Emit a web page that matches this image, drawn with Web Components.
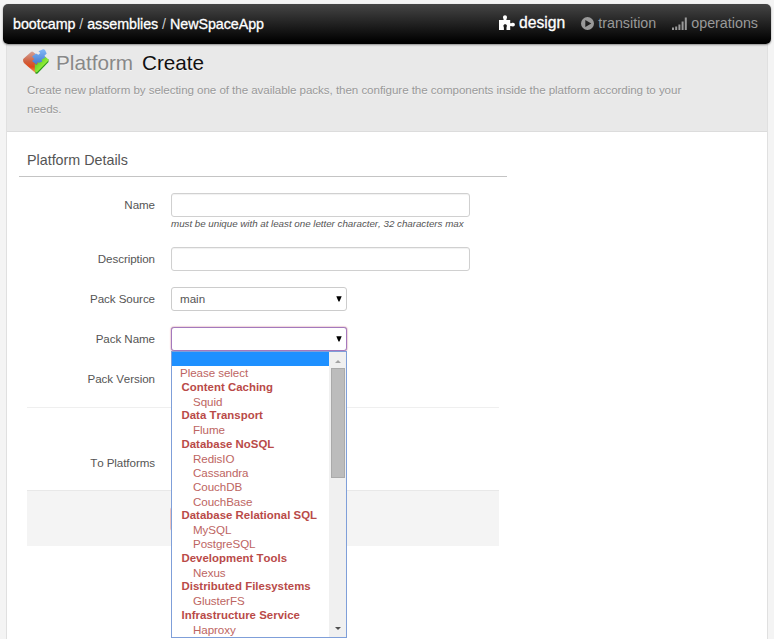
<!DOCTYPE html>
<html lang="en"><head><meta charset="utf-8"><title>Platform Create</title>
<style>
html,body{margin:0;height:100%;overflow:hidden;background:#f4f4f4}
body{font-family:"Liberation Sans",Arial,sans-serif;font-size:11.600px;letter-spacing:-.07px;font-kerning:none;color:#555}
</style></head><body>
<platform-page></platform-page>
<script>
const define = (name, html, setup) => customElements.define(name, class extends HTMLElement {
  constructor(){ super(); this.attachShadow({mode:'open'}).innerHTML = html; }
  connectedCallback(){ if(setup) setup(this, this.shadowRoot); }
});

define('nav-link', `<style>
:host{display:flex;align-items:center;gap:4px;font-size:14.3px;letter-spacing:0;line-height:20px;color:#999;white-space:nowrap}
:host([active]){color:#fff;font-size:15.700px;-webkit-text-stroke:.3px #fff}
</style><slot name="icon"></slot><slot></slot>`);

define('app-bar', `<style>
:host{display:flex;justify-content:space-between;align-items:center;box-sizing:border-box;height:40px;margin:0 3px;padding:0 13px 2px 10px;border-radius:5px;background:linear-gradient(#454545,#000 95%);box-shadow:0 1px 2px #0006;position:relative}
.crumbs{font-size:14.3px;letter-spacing:-.05px;color:#fff;-webkit-text-stroke:.3px #fff;white-space:pre;padding-top:1px}
i{font-style:normal;color:#ccc;-webkit-text-stroke:0}
nav{display:flex;gap:16px}
svg{fill:currentColor;display:block}
</style><div class="crumbs">bootcamp<i> / </i>assemblies<i> / </i>NewSpaceApp</div>
<nav>
<nav-link active><svg slot="icon" width="16" height="16" viewBox="0 0 16 16"><path d="M0 5h4.500C5 4.500 4 3.500 4 2.300 4 .9 4.800.2 6 .2s2 .8 2 2C8 3.500 7 4.500 7.500 5h3.700v3c.7.8 1.500-.3 2.800-.3 1.200 0 1.900.8 1.900 1.900s-.8 2-1.900 2c-1.300 0-2-.9-2.800-.3V15H7.500v-2c0-1 .4-1.300.4-2.200 0-.9-.7-1.500-1.700-1.500s-1.800.6-1.800 1.500c0 .9.5 1.200.5 2.200v2H0z"/></svg>design</nav-link>
<nav-link><svg slot="icon" width="13" height="13" viewBox="0 0 13 13"><path fill-rule="evenodd" d="M6.500 0a6.500 6.500 0 1 0 0 13 6.500 6.500 0 0 0 0-13zM4.300 3v7l6-3.500z"/></svg>transition</nav-link>
<nav-link><svg slot="icon" width="15" height="13" viewBox="0 0 15 13"><path d="M0 10.500h2V13H0zM3.200 9.500h2V13h-2zM6.400 7.500h2V13h-2zM9.600 4.500h2V13h-2zM12.800.5h2V13h-2z"/></svg>operations</nav-link>
</nav>`);

define('page-header', `<style>
:host{display:block;box-sizing:border-box;height:88px;padding:5px 70px 0 20px;background:#e9e9e9;border-bottom:1px solid #dcdcdc}
h1{display:flex;align-items:center;margin:0;margin-left:-5px;height:27px;font-size:20.7px;letter-spacing:0;font-weight:400;color:#111;text-shadow:0 1px #fff8}
svg{margin-right:6px;overflow:visible}span{color:#888;margin-right:9px}
p{margin:4px 0 0;line-height:19px;letter-spacing:-.06px;color:#999;text-shadow:0 1px #fff8}
</style><h1><svg width="28" height="26" viewBox="0 0 28 26">
<defs><linearGradient id="r" x2="0" y2="1"><stop stop-color="#d3a298"/><stop offset=".45" stop-color="#d0603f"/><stop offset=".7" stop-color="#e04a18"/><stop offset="1" stop-color="#f7a868"/></linearGradient><linearGradient id="g" x2="1" y2="1"><stop stop-color="#3fb52a"/><stop offset=".6" stop-color="#91ed35"/><stop offset="1" stop-color="#4dbb22"/></linearGradient><linearGradient id="b" x2="0" y2="1"><stop stop-color="#80b8f8"/><stop offset="1" stop-color="#4379cd"/></linearGradient></defs>
<path fill="url(#r)" d="M1 10Q1 9 2 8.200L9 2q1.200-.8 2.200 0L15 5v6l2 3-3 9.500L2.500 13.500Q1 12 1 10z"/>
<path fill="#2b9a1c" d="M13.500 21 26.500 9v3L15.500 23.500q-1 .7-2 0z"/>
<path fill="url(#g)" d="M12.800 14 15 15l1-3 3-3 4-2.500L26 9q1 1 0 2L15.200 22q-1 .7-2.400-.8z"/>
<path fill="url(#b)" d="M10 6.500 14 3.500l2.500 1.300L18.300 3 16.500 1.200l4.500-2q1.200-.3 2 .8l1.700 3.500-2.200 2.300 1 1.700-3.800 2 .6 2-3.100 1.300-1.800-.6-1 2.300L10 11l2.500-2z"/>
</svg><span>Platform</span>Create</h1>
<p>Create new platform by selecting one of the available packs, then configure the components inside the platform according to your needs.</p>`);

define('text-box', `<style>
:host{display:block;box-sizing:border-box;width:299px;height:24px;border:1px solid #d0d0d0;border-radius:3px;background:#fff;box-shadow:inset 0 1px 1px #0000000f}
</style>`);

define('select-box', `<style>
:host{display:flex;align-items:center;justify-content:space-between;box-sizing:border-box;width:176px;height:24px;padding:0 4.500px 0 8px;border:1px solid #ccc;border-radius:3px;background:#fff;position:relative}
:host([open]){border-color:#a479bd;box-shadow:0 0 2px #e99,0 0 1px #67b}
span{letter-spacing:0;line-height:12px;padding-bottom:1px}
</style><span><slot></slot></span><svg width="6" height="6" viewBox="0 0 6 6"><path d="M.3.300h5.400L3.500 5.500h-1z"/></svg><slot name="menu"></slot>`);

define('form-row', `<style>
:host{display:grid;grid-template-columns:128px 1fr;column-gap:16px;min-height:40px}
label{text-align:right;line-height:23px;height:25px}
small{display:block;font-size:9.800px;letter-spacing:-.03px;font-style:italic;line-height:14px;white-space:nowrap}
</style><label></label><div><slot></slot><small></small></div>`, (h,r)=>{
  r.querySelector('label').textContent=h.getAttribute('label');
  const s=r.querySelector('small'), t=h.getAttribute('hint');
  if(t) s.textContent=t; else s.remove();
});

define('option-menu', `<style>
:host{position:absolute;left:-1px;top:23px;z-index:2;box-sizing:border-box;width:176px;height:287px;border:1px solid #7f9fd9;background:#fff;display:flex;color:#bd6562}
.list{flex:1;overflow:hidden}
.list div{height:14.250px;line-height:13px;white-space:nowrap}
.list .sel{background:#1e90ff}.top{padding-left:8px}
.group{padding-left:9.500px;font-size:11.400px;letter-spacing:.03px;font-weight:700;color:#b94a48}
.item{padding-left:21px}
.bar{width:17px;background:#f0f0f0;display:flex;flex-direction:column;align-items:center}
.thumb{width:12px;height:108px;background:#bcbcbc;border:1px solid #aaa;flex:none}
.up,.down{width:0;height:0;border:3px solid transparent}
.up{border-top:0;border-bottom-color:#a3a3a3;margin-top:8px;margin-bottom:5px}
.down{border-bottom:0;border-top-color:#505050;margin-top:auto;margin-bottom:7px}
</style><div class="list"></div><div class="bar"><div class="up"></div><div class="thumb"></div><div class="down"></div></div>`, (h,r)=>{
  const rows=[['sel',''],['top','Please select'],['group','Content Caching'],['item','Squid'],['group','Data Transport'],['item','Flume'],['group','Database NoSQL'],['item','RedisIO'],['item','Cassandra'],['item','CouchDB'],['item','CouchBase'],['group','Database Relational SQL'],['item','MySQL'],['item','PostgreSQL'],['group','Development Tools'],['item','Nexus'],['group','Distributed Filesystems'],['item','GlusterFS'],['group','Infrastructure Service'],['item','Haproxy']];
  r.querySelector('.list').append(...rows.map(([c,t])=>{const d=document.createElement('div');d.className=c;d.textContent=t;return d;}));
});

define('platform-page', `<style>
:host{display:block;height:639px;padding-top:4px;box-sizing:border-box}
main{box-sizing:border-box;height:597px;margin:0 6px;border:1px solid #e0e0e0;border-width:0 1px;background:#fff}
h2{margin:15px 0 0 12px;width:488px;height:30px;box-sizing:border-box;padding-left:8px;border-bottom:1px solid #c4c4c4;font-size:14.3px;letter-spacing:0;font-weight:400;line-height:27px}
form{margin:16px 0 0 20px;width:472px}
.name{min-height:54px}
hr{border:0;border-top:1px solid #efefef;margin:0}
.to{padding-top:43px;min-height:82px;box-sizing:border-box}
footer{height:56px;background:#f4f4f4;border-top:1px solid #e8e8e8;box-sizing:border-box;padding:16px 0 0 143px}
.save{width:70px;height:24px;border-radius:3px;background:#edc4c0}
</style>
<app-bar></app-bar>
<main><page-header></page-header><h2>Platform Details</h2>
<form>
<form-row class="name" label="Name" hint="must be unique with at least one letter character, 32 characters max"><text-box></text-box></form-row>
<form-row label="Description"><text-box></text-box></form-row>
<form-row label="Pack Source"><select-box>main</select-box></form-row>
<form-row label="Pack Name"><select-box open><option-menu slot="menu"></option-menu></select-box></form-row>
<form-row label="Pack Version"></form-row>
<hr>
<form-row class="to" label="To Platforms"></form-row>
<footer><div class="save"></div></footer>
</form></main>`);
</script></body></html>
